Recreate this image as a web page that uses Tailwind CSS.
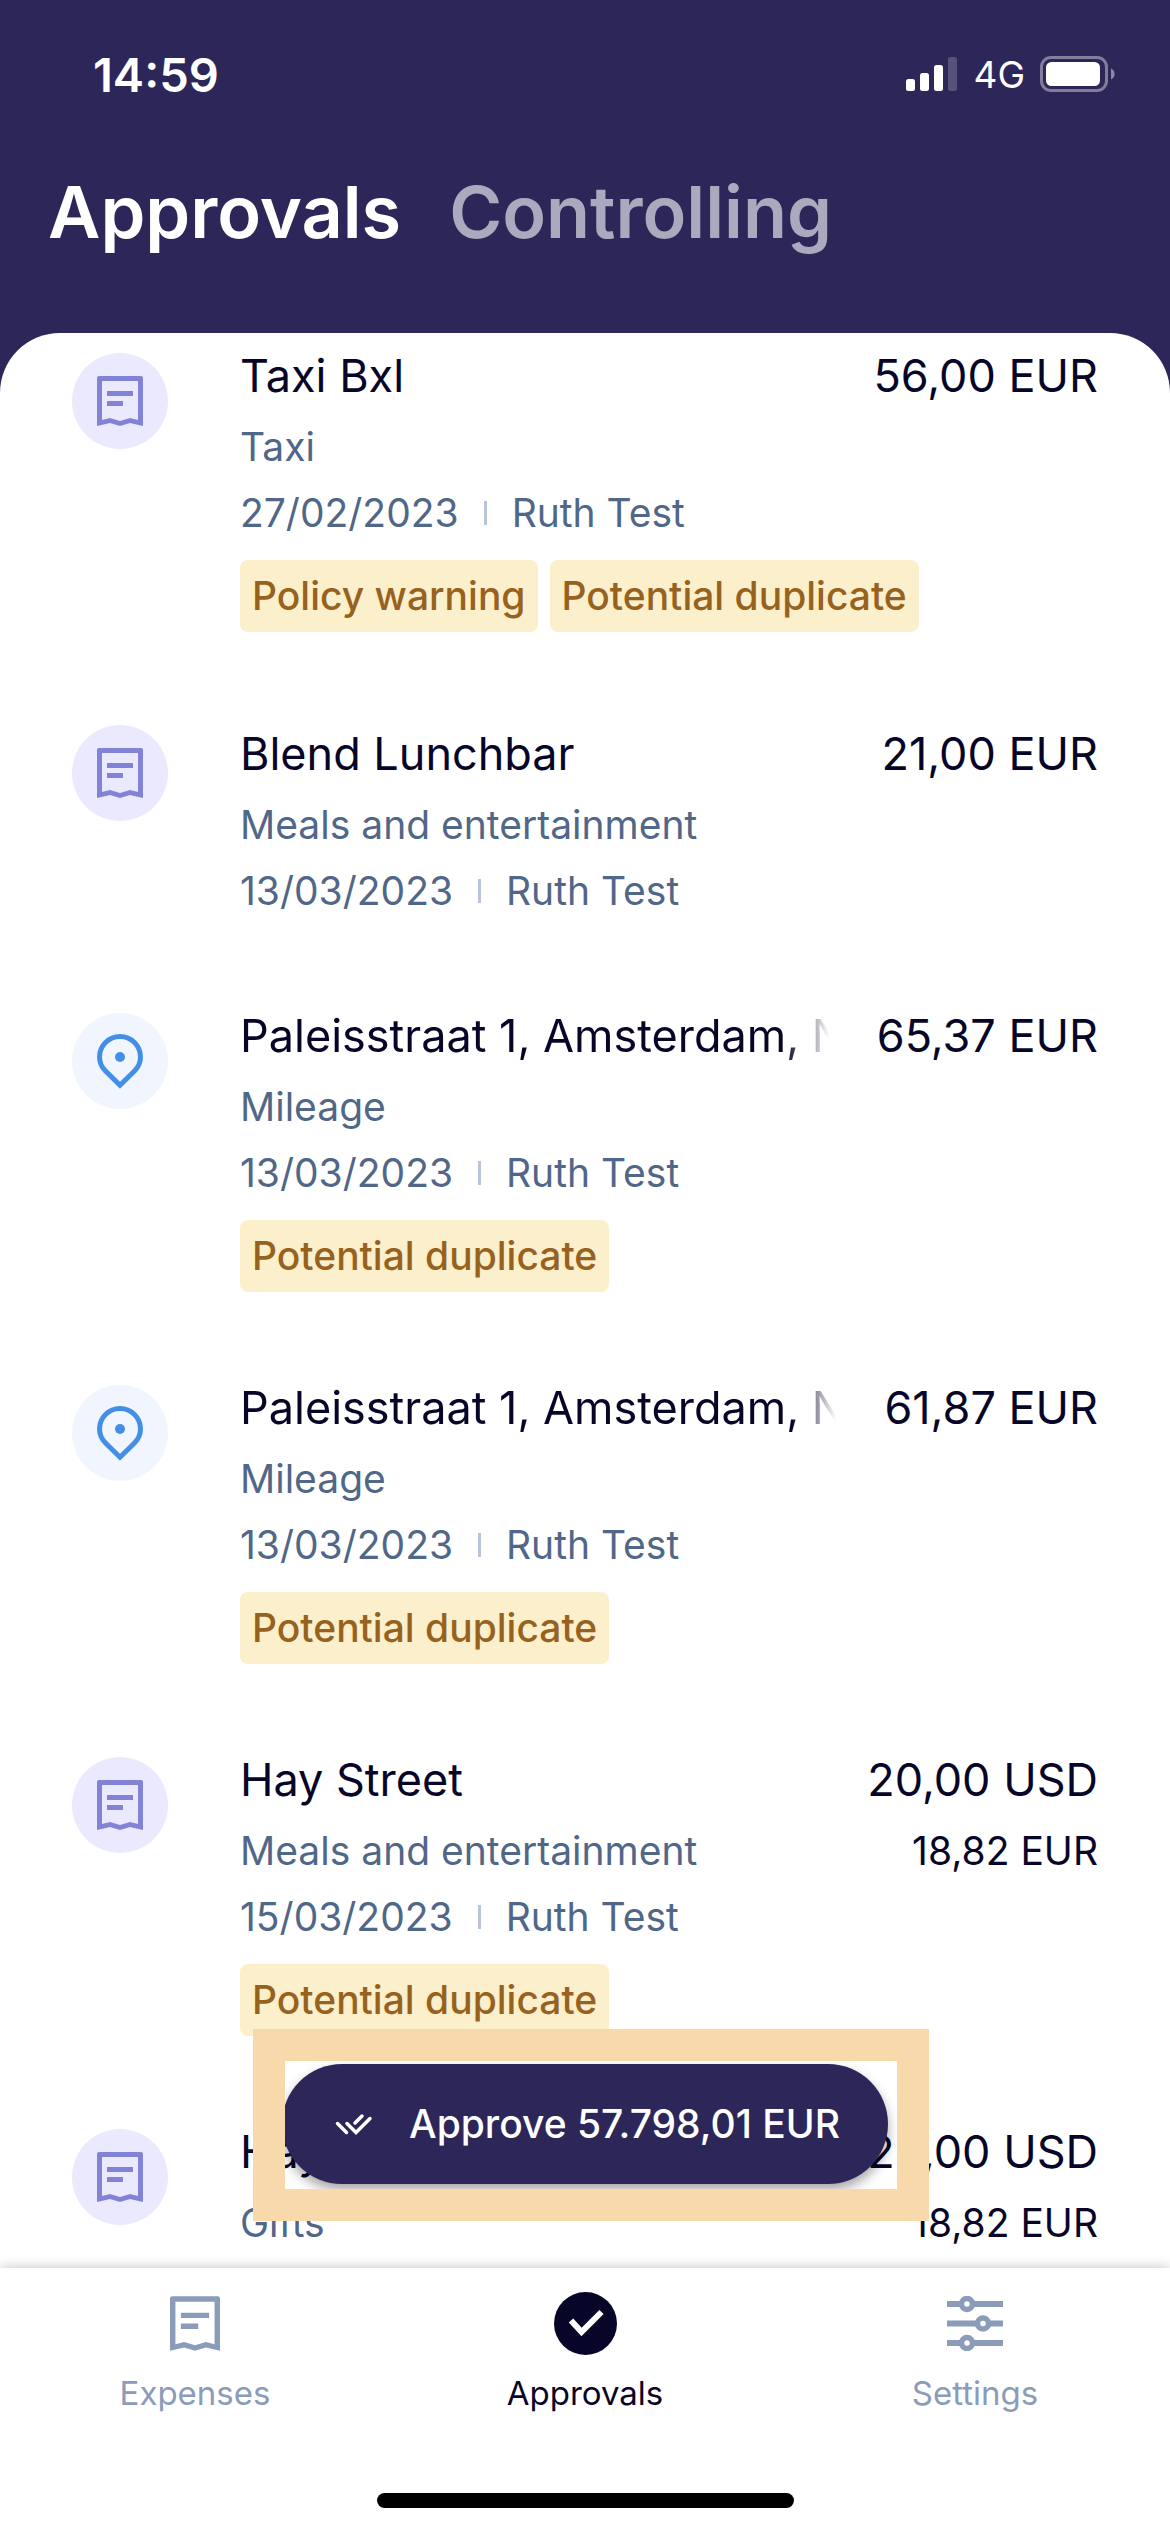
<!DOCTYPE html>
<html lang="en">
<head>
<meta charset="utf-8">
<meta name="viewport" content="width=device-width, initial-scale=1">
<title>Approvals</title>
<script src="https://cdn.jsdelivr.net/npm/@tailwindcss/browser@4"></script>
</head>
<body class="flex h-screen flex-col overflow-hidden bg-[#2d2759] font-['Inter',sans-serif] text-[#080628]">
<svg class="hidden" aria-hidden="true">
  <symbol id="receipt" viewBox="0 0 46 50">
    <path fill="currentColor" fill-rule="evenodd" d="M2 0H44a2 2 0 0 1 2 2V50L33 47 23 50 13 47 0 50V2a2 2 0 0 1 2-2zM5 5V44L13 42 23 45 33 42 41 44V5zM10 15H36V20H10zM10 25H26V30H10z"/>
  </symbol>
  <symbol id="pin" viewBox="0 0 46 55">
    <path fill="none" stroke="currentColor" stroke-width="5" d="M23 2.500A20.500 20.500 0 0 0 2.500 23C2.500 29 5 33.500 8.500 37L23 51.300 37.500 37C41 33.500 43.500 29 43.500 23A20.500 20.500 0 0 0 23 2.500z"/>
    <circle cx="23" cy="23" r="5" fill="currentColor"/>
  </symbol>
</svg>

<header class="shrink-0 text-white">
  <div class="flex h-[148px] items-center justify-between pr-[55px] pl-[93px]">
    <span class="text-[47px] leading-none font-semibold">14:59</span>
    <div class="flex items-center gap-[15px]">
      <svg class="h-[34px] w-[52px]" viewBox="0 0 52 34" fill="currentColor" role="img" aria-label="Signal">
        <rect y="22" width="9" height="12" rx="2.500"/><rect x="14" y="16" width="9" height="18" rx="2.500"/><rect x="28" y="8" width="9" height="26" rx="2.500"/><rect x="42" width="9" height="34" rx="2.500" opacity=".2"/>
      </svg>
      <span class="text-[37px] leading-none">4G</span>
      <svg class="h-9 w-[75px]" viewBox="0 0 75 36" role="img" aria-label="Battery">
        <rect x="1.500" y="1.500" width="65" height="33" rx="9.500" fill="none" stroke="#fff" stroke-opacity=".4" stroke-width="3"/>
        <rect x="6" y="6" width="54" height="24" rx="5.500" fill="#fff"/>
        <path d="M71 12.500a6 6 0 0 1 0 11z" fill="#fff" opacity=".45"/>
      </svg>
    </div>
  </div>
  <div class="flex gap-12 px-12 pt-5 pb-[77px] text-[72px] leading-[88px] font-semibold" role="tablist">
    <button type="button" role="tab" aria-selected="true">Approvals</button>
    <button type="button" role="tab" aria-selected="false" class="text-[#aba9bd]">Controlling</button>
  </div>
</header>

<main class="relative min-h-0 flex-1 overflow-hidden rounded-t-[60px] bg-white">
  <ul class="-mt-[29px]">
    <li class="flex min-h-[288px] gap-[72px] px-[72px] pt-[34px] pb-11">
      <span class="mt-[15px] grid size-24 shrink-0 place-items-center rounded-full bg-[#ebe9fd] text-[#8282d6]"><svg class="h-[50px] w-[46px]"><use href="#receipt"/></svg></span>
      <div class="min-w-0 flex-1">
        <div class="flex justify-between gap-12 text-[45px] leading-[76px] whitespace-nowrap">
          <h2 class="min-w-0 overflow-hidden">Taxi Bxl</h2><span>56,00 EUR</span>
        </div>
        <p class="text-[39px] leading-[66px] text-[#516788]">Taxi</p>
        <p class="flex items-center gap-[25px] text-[39px] leading-[66px] text-[#516788]"><span>27/02/2023</span><span class="h-6 w-[3px] bg-[#bac4d8]"></span><span>Ruth Test</span></p>
        <div class="mt-3.5 flex gap-3 text-[39px] leading-[72px] font-medium text-[#96621e]"><span class="rounded-lg bg-[#fcefcc] px-3">Policy warning</span><span class="rounded-lg bg-[#fcefcc] px-3">Potential duplicate</span></div>
      </div>
    </li>
    <li class="flex min-h-[288px] gap-[72px] px-[72px] pt-[34px] pb-10">
      <span class="mt-[15px] grid size-24 shrink-0 place-items-center rounded-full bg-[#ebe9fd] text-[#8282d6]"><svg class="h-[50px] w-[46px]"><use href="#receipt"/></svg></span>
      <div class="min-w-0 flex-1 pt-1.5">
        <div class="flex justify-between gap-12 text-[45px] leading-[76px] whitespace-nowrap">
          <h2 class="min-w-0 overflow-hidden">Blend Lunchbar</h2><span>21,00 EUR</span>
        </div>
        <p class="text-[39px] leading-[66px] text-[#516788]">Meals and entertainment</p>
        <p class="flex items-center gap-[25px] text-[39px] leading-[66px] text-[#516788]"><span>13/03/2023</span><span class="h-6 w-[3px] bg-[#bac4d8]"></span><span>Ruth Test</span></p>
      </div>
    </li>
    <li class="flex min-h-[288px] gap-[72px] px-[72px] pt-[34px] pb-11">
      <span class="mt-[15px] grid size-24 shrink-0 place-items-center rounded-full bg-[#f1f6fe] text-[#448fe6]"><svg class="h-[55px] w-[46px]"><use href="#pin"/></svg></span>
      <div class="min-w-0 flex-1">
        <div class="flex justify-between gap-12 text-[45px] leading-[76px] whitespace-nowrap">
          <h2 class="min-w-0 flex-1 overflow-hidden [mask-image:linear-gradient(to_right,black_calc(100%-44px),transparent)]">Paleisstraat 1, Amsterdam, N</h2><span>65,37 EUR</span>
        </div>
        <p class="text-[39px] leading-[66px] text-[#516788]">Mileage</p>
        <p class="flex items-center gap-[25px] text-[39px] leading-[66px] text-[#516788]"><span>13/03/2023</span><span class="h-6 w-[3px] bg-[#bac4d8]"></span><span>Ruth Test</span></p>
        <div class="mt-3.5 flex gap-3 text-[39px] leading-[72px] font-medium text-[#96621e]"><span class="rounded-lg bg-[#fcefcc] px-3">Potential duplicate</span></div>
      </div>
    </li>
    <li class="flex min-h-[288px] gap-[72px] px-[72px] pt-[34px] pb-11">
      <span class="mt-[15px] grid size-24 shrink-0 place-items-center rounded-full bg-[#f1f6fe] text-[#448fe6]"><svg class="h-[55px] w-[46px]"><use href="#pin"/></svg></span>
      <div class="min-w-0 flex-1">
        <div class="flex justify-between gap-12 text-[45px] leading-[76px] whitespace-nowrap">
          <h2 class="min-w-0 flex-1 overflow-hidden [mask-image:linear-gradient(to_right,black_calc(100%-44px),transparent)]">Paleisstraat 1, Amsterdam, N</h2><span>61,87 EUR</span>
        </div>
        <p class="text-[39px] leading-[66px] text-[#516788]">Mileage</p>
        <p class="flex items-center gap-[25px] text-[39px] leading-[66px] text-[#516788]"><span>13/03/2023</span><span class="h-6 w-[3px] bg-[#bac4d8]"></span><span>Ruth Test</span></p>
        <div class="mt-3.5 flex gap-3 text-[39px] leading-[72px] font-medium text-[#96621e]"><span class="rounded-lg bg-[#fcefcc] px-3">Potential duplicate</span></div>
      </div>
    </li>
    <li class="flex min-h-[288px] gap-[72px] px-[72px] pt-[34px] pb-11">
      <span class="mt-[15px] grid size-24 shrink-0 place-items-center rounded-full bg-[#ebe9fd] text-[#8282d6]"><svg class="h-[50px] w-[46px]"><use href="#receipt"/></svg></span>
      <div class="min-w-0 flex-1">
        <div class="flex justify-between gap-12 text-[45px] leading-[76px] whitespace-nowrap">
          <h2 class="min-w-0 overflow-hidden">Hay Street</h2><span>20,00 USD</span>
        </div>
        <p class="flex justify-between text-[39px] leading-[66px] text-[#516788]"><span>Meals and entertainment</span><span class="text-[#080628]">18,82 EUR</span></p>
        <p class="flex items-center gap-[25px] text-[39px] leading-[66px] text-[#516788]"><span>15/03/2023</span><span class="h-6 w-[3px] bg-[#bac4d8]"></span><span>Ruth Test</span></p>
        <div class="mt-3.5 flex gap-3 text-[39px] leading-[72px] font-medium text-[#96621e]"><span class="rounded-lg bg-[#fcefcc] px-3">Potential duplicate</span></div>
      </div>
    </li>
    <li class="flex min-h-[288px] gap-[72px] px-[72px] pt-[34px] pb-11">
      <span class="mt-[15px] grid size-24 shrink-0 place-items-center rounded-full bg-[#ebe9fd] text-[#8282d6]"><svg class="h-[50px] w-[46px]"><use href="#receipt"/></svg></span>
      <div class="min-w-0 flex-1">
        <div class="flex justify-between gap-12 text-[45px] leading-[76px] whitespace-nowrap">
          <h2 class="min-w-0 overflow-hidden">Hay Street</h2><span>20,00 USD</span>
        </div>
        <p class="flex justify-between text-[39px] leading-[66px] text-[#516788]"><span>Gifts</span><span class="text-[#080628]">18,82 EUR</span></p>
      </div>
    </li>
  </ul>

  <!-- Floating bulk action with its highlight frame -->
  <div class="absolute bottom-[84px] left-1/2 w-[606px] -translate-x-1/2">
    <button type="button" class="flex h-[120px] w-full items-center gap-9 rounded-full bg-[#2d2759] pl-[53px] text-[39px] font-medium whitespace-nowrap text-white shadow-[0_6px_12px_rgba(0,0,0,0.35)]">
      <svg class="h-[22px] w-[38px]" viewBox="0 0 38 22" fill="none" stroke="currentColor" stroke-width="3.500" stroke-linecap="round" aria-hidden="true"><path d="M2.500 10.500 11.500 19.500M12 10.500 21 19.500 35 5.500M20 10 27 3"/></svg>
      Approve 57.798,01 EUR
    </button>
    <div class="pointer-events-none absolute -top-[35px] -right-[41px] -bottom-[37px] -left-[29px] border-32 border-[#f8d9ac]"></div>
  </div>
</main>

<nav class="relative shrink-0 bg-white pt-5 pb-6 shadow-[0_0_12px_rgba(0,0,0,0.25)]">
  <div class="grid grid-cols-3 text-[33px] leading-[48px] text-[#8a9cb9]">
    <a href="#expenses" class="flex flex-col items-center gap-[11px]"><span class="grid h-[70px] place-items-center"><svg class="h-[55px] w-[50px]"><use href="#receipt"/></svg></span>Expenses</a>
    <a href="#approvals" aria-current="page" class="flex flex-col items-center gap-[11px] text-[#080628]"><span class="grid h-[70px] place-items-center"><svg class="size-[63px]" viewBox="0 0 63 63"><circle cx="31.500" cy="31.500" r="31.500" fill="currentColor"/><path d="M17 28.500 27.500 40 47.500 20" fill="none" stroke="#fff" stroke-width="6"/></svg></span>Approvals</a>
    <a href="#settings" class="flex flex-col items-center gap-[11px]"><span class="grid h-[70px] place-items-center"><svg class="h-[55px] w-14" viewBox="0 0 56 55" fill="none" stroke="currentColor"><path stroke-width="6" d="M0 8H14M26 8H56M0 27.500H30M42 27.500H56M0 47H14M26 47H56"/><g stroke-width="5.500"><circle cx="20" cy="8" r="5.500"/><circle cx="36" cy="27.500" r="5.500"/><circle cx="20" cy="47" r="5.500"/></g></svg></span>Settings</a>
  </div>
  <div class="mx-auto mt-[76px] h-[15px] w-[417px] rounded-full bg-black"></div>
</nav>
</body>
</html>
